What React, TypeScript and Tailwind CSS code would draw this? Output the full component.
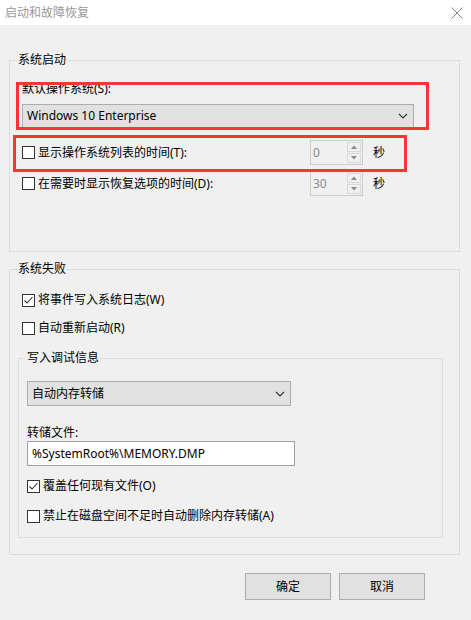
import React from "react";

const FONT = { fontFamily: '"Noto Sans", "Noto Sans CJK SC", sans-serif' };

function Check({ checked }: { checked?: boolean }) {
  return (
    <span className="w-[13px] h-[13px] shrink-0 border border-[#333333] bg-white flex items-center justify-center">
      {checked && (
        <svg width="11" height="11" viewBox="0 0 11 11">
          <polyline points="1.5,5.5 4,8 9.5,2" fill="none" stroke="#333" strokeWidth="1.1" />
        </svg>
      )}
    </span>
  );
}

function Chevron() {
  return (
    <svg width="10" height="6" viewBox="0 0 10 6">
      <polyline points="1,1 5,5 9,1" fill="none" stroke="#333" strokeWidth="1.1" />
    </svg>
  );
}

function Spin({ value }: { value: string }) {
  return (
    <div className="w-[53px] h-[25px] border border-[#cccccc] bg-[#f0f0f0] flex">
      <div className="flex-1 pl-[2px] flex items-center text-[12px] text-[#8a8a8a]">{value}</div>
      <div className="w-[16px] flex flex-col p-[1px] gap-[1px]">
        <div className="flex-1 border border-[#d9d9d9] flex items-center justify-center">
          <svg width="6" height="4" viewBox="0 0 6 4">
            <polygon points="0,4 3,0.5 6,4" fill="#8a8a8a" />
          </svg>
        </div>
        <div className="flex-1 border border-[#d9d9d9] flex items-center justify-center">
          <svg width="6" height="4" viewBox="0 0 6 4">
            <polygon points="0,0 3,3.5 6,0" fill="#8a8a8a" />
          </svg>
        </div>
      </div>
    </div>
  );
}

export default function App() {
  return (
    <div
      className="relative w-[471px] h-[620px] bg-[#f0f0f0] text-black text-[12px] leading-[16px] overflow-hidden"
      style={FONT}
    >
      {/* Title bar */}
      <div className="h-[25px] bg-white flex items-center justify-between">
        <span className="ml-[5px] text-[12px] text-[#999999]">启动和故障恢复</span>
        <svg className="mr-[8px]" width="12" height="12" viewBox="0 0 12 12">
          <path d="M0.5 0.5 L11.5 11.5 M11.5 0.5 L0.5 11.5" stroke="#808080" strokeWidth="1" />
        </svg>
      </div>

      {/* 系统启动 */}
      <fieldset className="mt-[27px] ml-[9px] w-[451px] border border-[#dcdcdc] p-0">
        <legend className="ml-[7px] px-[1px] leading-[16px]">系统启动</legend>
        <div className="pl-[12px] pb-[55px]">
          <div className="mt-[13px] leading-[16px]">默认操作系统(S):</div>
          <div className="mt-[7px] w-[392px] h-[24px] bg-[#e1e1e1] border border-[#adadad] flex items-center justify-between pl-[4px] pr-[5px]">
            <span>Windows 10 Enterprise</span>
            <Chevron />
          </div>
          <div className="mt-[12px] h-[25px] flex items-center">
            <div className="w-[288px] flex items-center gap-[3px]">
              <Check />
              <span>显示操作系统列表的时间(T):</span>
            </div>
            <Spin value="0" />
            <span className="ml-[10px]">秒</span>
          </div>
          <div className="mt-[6px] h-[25px] flex items-center">
            <div className="w-[288px] flex items-center gap-[3px]">
              <Check />
              <span>在需要时显示恢复选项的时间(D):</span>
            </div>
            <Spin value="30" />
            <span className="ml-[10px]">秒</span>
          </div>
        </div>
      </fieldset>

      {/* 系统失败 */}
      <fieldset className="mt-[9px] ml-[9px] w-[451px] border border-[#dcdcdc] p-0">
        <legend className="ml-[7px] px-[1px] leading-[16px]">系统失败</legend>
        <div className="pl-[8px] pb-[16px]">
          <div className="mt-[15px] ml-[4px] flex items-center gap-[3px] h-[16px]">
            <Check checked />
            <span>将事件写入系统日志(W)</span>
          </div>
          <div className="mt-[12px] ml-[4px] flex items-center gap-[3px] h-[16px]">
            <Check />
            <span>自动重新启动(R)</span>
          </div>
          <fieldset className="mt-[14px] w-[425px] border border-[#dcdcdc] p-0">
            <legend className="ml-[7px] px-[1px] leading-[16px]">写入调试信息</legend>
            <div className="pl-[8px] pb-[13px]">
              <div className="mt-[15px] w-[264px] h-[25px] bg-[#e1e1e1] border border-[#adadad] flex items-center justify-between pl-[4px] pr-[5px]">
                <span>自动内存转储</span>
                <Chevron />
              </div>
              <div className="mt-[19px] leading-[16px]">转储文件:</div>
              <div className="w-[268px] h-[25px] bg-white border border-[#a0a0a0] flex items-center pl-[4px]">
                %SystemRoot%\MEMORY.DMP
              </div>
              <div className="mt-[12px] flex items-center gap-[3px] h-[16px]">
                <Check checked />
                <span>覆盖任何现有文件(O)</span>
              </div>
              <div className="mt-[14px] flex items-center gap-[3px] h-[16px]">
                <Check />
                <span>禁止在磁盘空间不足时自动删除内存转储(A)</span>
              </div>
            </div>
          </fieldset>
        </div>
      </fieldset>

      {/* Buttons */}
      <div className="mt-[18px] pr-[46px] flex justify-end gap-[8px]">
        <button className="w-[86px] h-[27px] bg-[#e1e1e1] border border-[#adadad]">确定</button>
        <button className="w-[86px] h-[27px] bg-[#e1e1e1] border border-[#adadad]">取消</button>
      </div>

      {/* Red annotation boxes */}
      <div className="absolute left-[16px] top-[82px] w-[413px] h-[48px] border-[3px] border-[#ff3333] pointer-events-none" />
      <div className="absolute left-[13px] top-[135px] w-[394px] h-[37px] border-[3px] border-[#ff3333] pointer-events-none" />
    </div>
  );
}
